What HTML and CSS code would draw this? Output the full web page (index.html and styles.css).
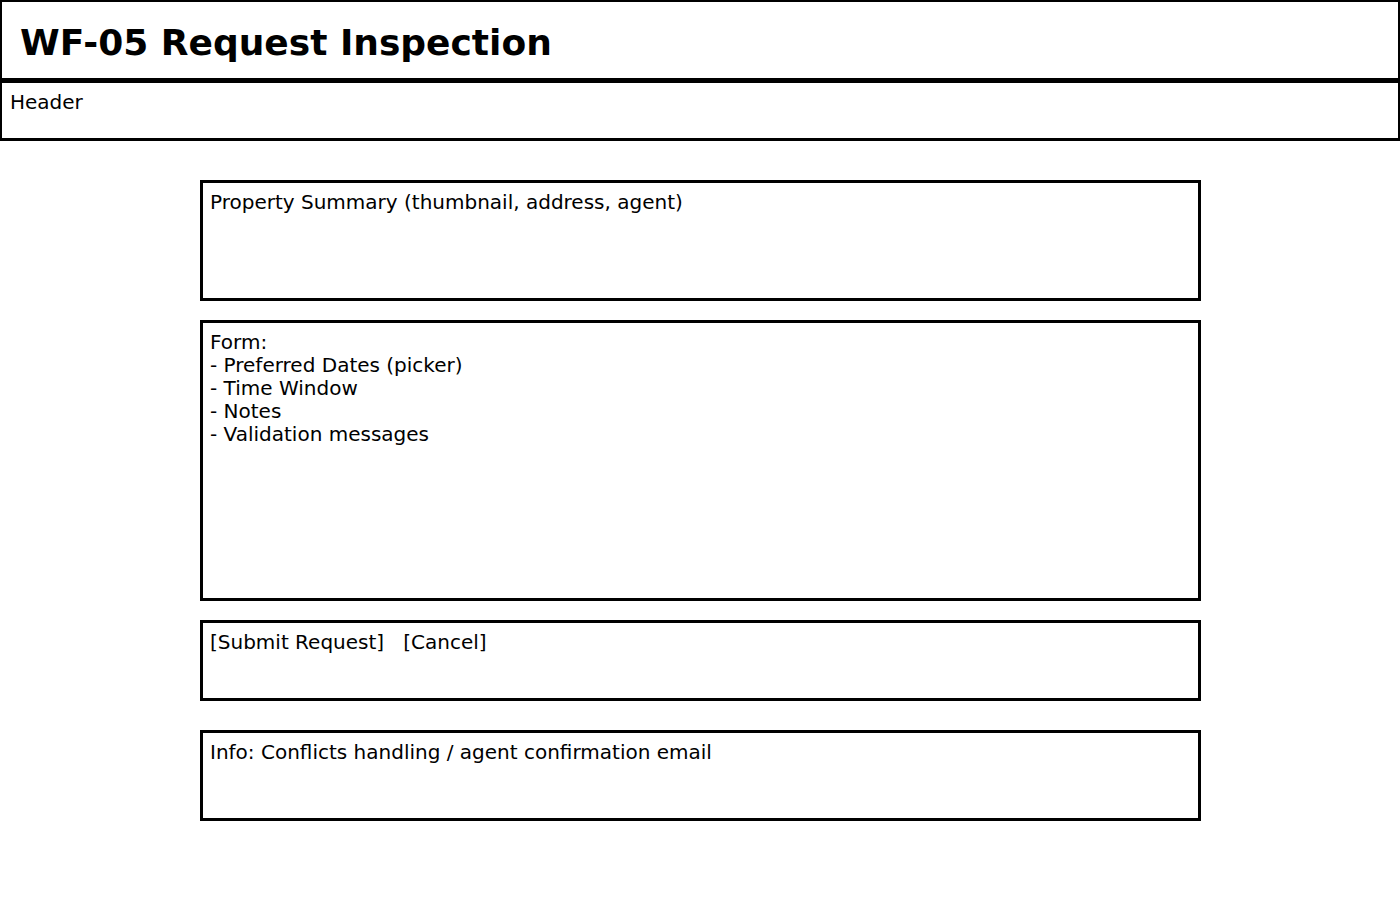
FILE: index.html
```html
<!DOCTYPE html>
<html>
<head>
<meta charset="utf-8">
<title>WF-05 Request Inspection</title>
<link rel="stylesheet" href="styles.css">
</head>
<body>
<div class="title-bar"><h1 class="title">WF-05 Request Inspection</h1></div>
<div class="header-bar"><div class="label">Header</div></div>
<main class="content">
  <section class="box box-summary"><div class="label">Property Summary (thumbnail, address, agent)</div></section>
  <section class="box box-form"><div class="label">Form:
- Preferred Dates (picker)
- Time Window
- Notes
- Validation messages</div></section>
  <section class="box box-actions"><div class="label">[Submit Request]   [Cancel]</div></section>
  <section class="box box-info"><div class="label">Info: Conflicts handling / agent confirmation email</div></section>
</main>
</body>
</html>
```

FILE: styles.css
```css
html, body {
  margin: 0;
  padding: 0;
  background: #fff;
  color: #000;
  font-family: "DejaVu Sans", "Liberation Sans", sans-serif;
}

.title-bar {
  box-sizing: border-box;
  height: 81px;
  border-style: solid;
  border-color: #000;
  border-width: 2px 2px 3px 2px;
  padding: 20px 0 0 18px;
}

.title {
  margin: 0;
  font-size: 36px;
  font-weight: bold;
  line-height: normal;
}

.header-bar {
  box-sizing: border-box;
  height: 61px;
  margin-top: -1px;
  border-style: solid;
  border-color: #000;
  border-width: 3px 2px 3px 2px;
  padding: 8px 0 0 8px;
}

.label {
  font-size: 20px;
  line-height: 23px;
  white-space: pre;
}

.content {
  display: flex;
  flex-direction: column;
  margin: 39px 0 0 200px;
  width: 1001px;
}

.box {
  box-sizing: border-box;
  border: 3px solid #000;
  padding: 8px 0 0 7px;
}

.box-summary { height: 121px; }
.box-form { height: 281px; margin-top: 19px; }
.box-actions { height: 81px; margin-top: 19px; }
.box-info { height: 91px; margin-top: 29px; }
```
